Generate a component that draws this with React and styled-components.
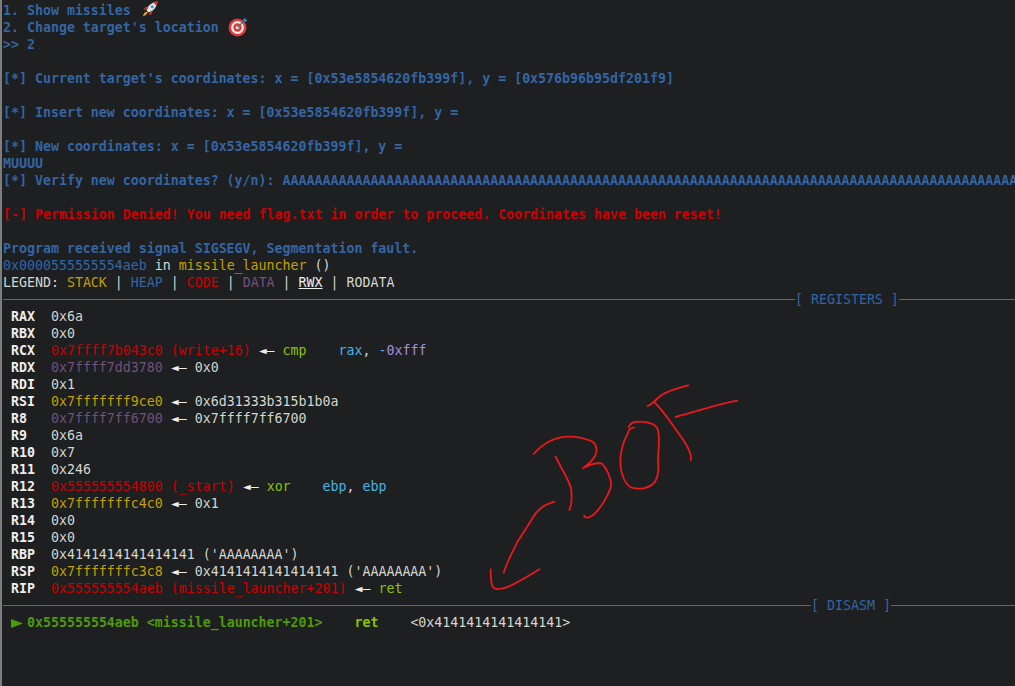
import React from 'react'
import styled, { createGlobalStyle } from 'styled-components'

const Global = createGlobalStyle`
  html, body {
    margin: 0;
    background: #1d1f21;
  }
`

const colors = {
  blue: '#3465a4',
  rule: '#3870b8',
  red: '#cc0000',
  yellow: '#c4a000',
  purple: '#75507b',
  green: '#4e9a06',
  lime: '#8ac400',
  cyan: '#46b4e8',
  violet: '#a58fe0',
  white: '#d3d7cf',
  text: '#eeeeec',
}

const Terminal = styled.div`
  position: relative;
  box-sizing: border-box;
  width: 1015px;
  height: 686px;
  overflow: hidden;
  padding: 2px 0 0 1px;
  border-left: 2px solid #7d7d7d;
  background: #1d1f21;
  color: ${colors.white};
  font-family: "DejaVu Sans Mono", "Liberation Mono", monospace;
  font-size: 13.28px;
`

const Line = styled.div`
  height: 17px;
  line-height: 17px;
  white-space: pre;
  color: ${p => colors[p.$color] || colors.white};
  font-weight: ${p => (p.$bold ? 700 : 400)};
`

const C = styled.span`
  color: ${p => colors[p.$c]};
  font-weight: ${p => (p.$bold ? 700 : 'inherit')};
  text-decoration: ${p => (p.$under ? 'underline' : 'none')};
`

const Banner = styled.div`
  display: flex;
  align-items: center;
  height: 17px;
  line-height: 17px;
  white-space: pre;
  color: ${colors.blue};
`

const Rule = styled.div`
  height: 1px;
  background: ${colors.rule};
  margin-top: -1px;
  flex: ${p => (p.$cols ? `0 0 ${p.$cols * 8}px` : '1')};
`

const Emoji = styled.svg`
  display: inline-block;
  vertical-align: ${p => p.$lift}px;
  margin: -6px 0 -6px ${p => p.$gap}px;
`

const Pointer = styled.svg`
  display: inline-block;
  vertical-align: -1px;
  margin-right: 4px;
`

const Sketch = styled.svg`
  position: absolute;
  left: 468px;
  top: 370px;
  fill: none;
  stroke: #e8181c;
  stroke-width: 5.5;
  stroke-linecap: round;
  stroke-linejoin: round;
`

const Rocket = () => (
  <Emoji $gap={3} $lift={4} width="16" height="16" viewBox="0 0 16 16">
    <path d="M15.5 .5 C12 1 8.5 2.6 6.4 5.2 L4.6 9.6 L6.4 11.4 L10.8 9.6 C13.4 7.5 15 4 15.5 .5Z" fill="#dfe3e8" />
    <path d="M15.5 .5 C14 .7 12.6 1.1 11.4 1.7 L14.3 4.6 C14.9 3.4 15.3 2 15.5 .5Z" fill="#d8322e" />
    <circle cx="10.2" cy="5.8" r="1.5" fill="#4f8fc8" />
    <path d="M6.4 5.2 L3 6.2 L1.6 9 L4.6 8.4Z M10.8 9.6 L9.8 13 L7 14.4 L7.6 11.4Z" fill="#c8352f" />
    <path d="M4.2 10.4 L5.6 11.8 C4.8 13.4 3 15 .8 15.4 C1.2 13.2 2.6 11.2 4.2 10.4Z" fill="#f0a020" />
  </Emoji>
)

const Target = () => (
  <Emoji $gap={1} $lift={1} width="20" height="20" viewBox="0 0 20 20">
    <circle cx="9.5" cy="10.5" r="9" fill="#e0393c" />
    <circle cx="9.5" cy="10.5" r="6.4" fill="#f4efe8" />
    <circle cx="9.5" cy="10.5" r="4.2" fill="#e0393c" />
    <circle cx="9.5" cy="10.5" r="1.8" fill="#f4efe8" />
    <path d="M9.5 10.5 L16 4" stroke="#5a6a78" strokeWidth="1.2" />
    <path d="M15 3 L17 .6 L17.6 2.4 L19.6 3 L17.2 5Z" fill="#3f8fd0" />
  </Emoji>
)

const Arrow = () => <C $c="text">◄—</C>

const Reg = ({ name, children }) => (
  <Line>
    {' '}
    <C $c="text" $bold>{name.padEnd(3)}</C>
    {'  '}
    {children}
  </Line>
)

const App = () => (
  <Terminal>
    <Global />
    <Line $color="blue" $bold>1. Show missiles <Rocket /></Line>
    <Line $color="blue" $bold>2. Change target's location <Target /></Line>
    <Line $color="blue" $bold>{'>> 2'}</Line>
    <Line />
    <Line $color="blue" $bold>[*] Current target's coordinates: x = [0x53e5854620fb399f], y = [0x576b96b95df201f9]</Line>
    <Line />
    <Line $color="blue" $bold>[*] Insert new coordinates: x = [0x53e5854620fb399f], y = </Line>
    <Line />
    <Line $color="blue" $bold>[*] New coordinates: x = [0x53e5854620fb399f], y = </Line>
    <Line $color="blue" $bold>MUUUU</Line>
    <Line $color="blue" $bold>[*] Verify new coordinates? (y/n): {'A'.repeat(92)}</Line>
    <Line />
    <Line $color="red" $bold>[-] Permission Denied! You need flag.txt in order to proceed. Coordinates have been reset!</Line>
    <Line />
    <Line $color="blue" $bold>Program received signal SIGSEGV, Segmentation fault.</Line>
    <Line><C $c="blue">0x0000555555554aeb</C> in <C $c="yellow">missile_launcher</C> ()</Line>
    <Line>LEGEND: <C $c="yellow">STACK</C> | <C $c="blue">HEAP</C> | <C $c="red">CODE</C> | <C $c="purple">DATA</C> | <C $c="text" $under>RWX</C> | RODATA</Line>
    <Banner><Rule $cols={99} />[ REGISTERS ]<Rule /></Banner>
    <Reg name="RAX">0x6a</Reg>
    <Reg name="RBX">0x0</Reg>
    <Reg name="RCX"><C $c="red">0x7ffff7b043c0 (write+16)</C> <Arrow /> <C $c="lime">cmp</C>    <C $c="cyan">rax</C>, <C $c="cyan">-</C><C $c="violet">0xfff</C></Reg>
    <Reg name="RDX"><C $c="purple">0x7ffff7dd3780</C> <Arrow /> 0x0</Reg>
    <Reg name="RDI">0x1</Reg>
    <Reg name="RSI"><C $c="yellow">0x7fffffff9ce0</C> <Arrow /> 0x6d31333b315b1b0a</Reg>
    <Reg name="R8"><C $c="purple">0x7ffff7ff6700</C> <Arrow /> 0x7ffff7ff6700</Reg>
    <Reg name="R9">0x6a</Reg>
    <Reg name="R10">0x7</Reg>
    <Reg name="R11">0x246</Reg>
    <Reg name="R12"><C $c="red">0x555555554800 (_start)</C> <Arrow /> <C $c="lime">xor</C>    <C $c="cyan">ebp</C>, <C $c="cyan">ebp</C></Reg>
    <Reg name="R13"><C $c="yellow">0x7fffffffc4c0</C> <Arrow /> 0x1</Reg>
    <Reg name="R14">0x0</Reg>
    <Reg name="R15">0x0</Reg>
    <Reg name="RBP">0x4141414141414141 ('AAAAAAAA')</Reg>
    <Reg name="RSP"><C $c="yellow">0x7fffffffc3c8</C> <Arrow /> 0x4141414141414141 ('AAAAAAAA')</Reg>
    <Reg name="RIP"><C $c="red">0x555555554aeb (missile_launcher+201)</C> <Arrow /> <C $c="lime">ret</C></Reg>
    <Banner><Rule $cols={101} />[ DISASM ]<Rule /></Banner>
    <Line> <Pointer width="12" height="9" viewBox="0 0 12 9"><path d="M0 0 L12 4.5 L0 9Z" fill="#4e9a06" /></Pointer><C $c="green" $bold>0x555555554aeb &lt;missile_launcher+201&gt;</C>    <C $c="lime" $bold>ret</C>    &lt;0x4141414141414141&gt;</Line>
    <Sketch width="290" height="230" viewBox="0 0 870 690">
      <path d="M253 395 C225 403 205 415 190 440 C175 465 155 495 140 520 C125 550 110 580 101 608" />
      <path d="M62 598 C62 620 62 640 68 650 C75 660 95 658 115 650 C145 637 180 615 208 598" />
      <path d="M191 252 C215 225 245 203 290 200 C320 198 350 207 368 215 C382 225 382 245 375 258 C365 275 350 287 339 294 C355 285 375 278 395 280 C410 295 425 325 423 350 C415 375 395 410 375 430 C360 445 345 447 342 436" />
      <path d="M257 260 C270 290 295 325 303 355 C307 385 305 405 298 420" />
      <path d="M493 173 C485 172 478 175 473 190 C460 215 450 245 451 280 C452 310 465 345 485 353 C510 360 540 355 555 335 C568 315 565 290 564 260 C567 230 570 195 562 175 C550 155 510 152 490 157 C482 160 478 165 476 172" />
      <path d="M533 108 C545 105 555 90 575 75 C600 60 630 52 655 46" />
      <path d="M552 96 C580 120 610 170 640 210 C655 232 665 250 663 270" />
      <path d="M617 141 C680 125 750 100 802 92" />
    </Sketch>
  </Terminal>
)

export default App
